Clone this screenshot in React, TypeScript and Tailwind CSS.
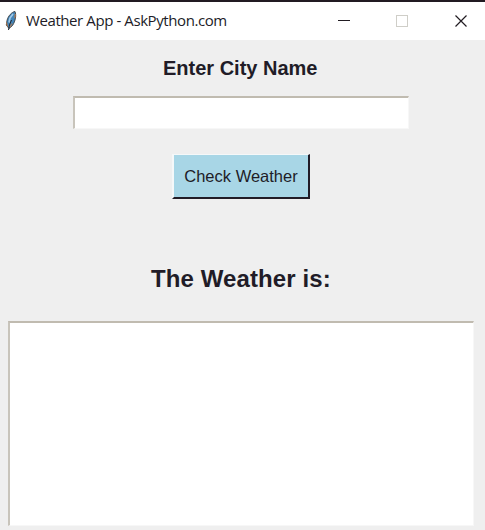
function Feather() {
  return (
    <svg width="12" height="21" viewBox="0 0 12 21" className="mb-0.5 shrink-0">
      <path d="M10 1.500 C7 1.800 3 6 2 10.500 L1.300 15 L4 18.500 L7.500 15.500 C10.500 11 11.500 5 10 1.500Z" fill="#4385b8" stroke="#3a3d42" strokeWidth="0.900" />
      <path d="M8 4 L5 8 L4 12.500" stroke="#a4cae8" strokeWidth="1.600" fill="none" />
      <path d="M6.500 10 L4.500 15 L3.500 20" stroke="#1f2530" strokeWidth="1" fill="none" />
      <path d="M1.500 12.500 L2.500 16.500 M10.300 4 L9.800 8 M7 13.500 L5 17" stroke="#c07a43" strokeWidth="1" />
    </svg>
  );
}

export default function App() {
  return (
    <div className="flex h-[530px] w-[485px] flex-col overflow-hidden bg-[#efefef] font-['Liberation_Sans',Arial,sans-serif] text-[#211c27]">
      <header className="flex h-10 shrink-0 items-center border-t-2 border-[#211a22] bg-white pl-[5px]">
        <Feather />
        <h1 className="mb-0.5 ml-[9px] whitespace-nowrap font-['Open_Sans','Noto_Sans',sans-serif] text-[15px] leading-5 tracking-[-0.41px]">
          Weather App - AskPython.com
        </h1>
        <svg width="132" height="14" viewBox="0 0 132 14" className="mr-[17px] ml-auto shrink-0" shapeRendering="crispEdges">
          <path d="M2 6.500H14" stroke="#211c22" />
          <rect x="60.500" y="1.500" width="11" height="11" fill="none" stroke="#cfcec8" />
          <path d="M119.500 1.500L130.500 12.500M130.500 1.500L119.500 12.500" stroke="#211c22" strokeWidth="1.200" shapeRendering="auto" />
        </svg>
      </header>
      <main className="flex flex-col items-start">
        <label htmlFor="city" className="mt-4 ml-[163px] whitespace-nowrap text-[20px] leading-6 font-bold">
          Enter City Name
        </label>
        <input id="city" className="mt-4 ml-[73px] h-[33px] w-[336px] border-t-2 border-r border-b border-l-2 border-t-[#c0bbb0] border-r-[#f7f7f7] border-b-[#f7f7f7] border-l-[#c8c4bb] bg-white px-2 outline-none" />
        <button className="mt-[25px] ml-[172px] flex h-[45px] w-[138px] items-center justify-center border-t-[1px] border-r-2 border-b-2 border-l-2 border-t-[#f5f8f9] border-r-[#211c27] border-b-[#211c27] border-l-[#f5f8f9] bg-[#a8d6e6] text-[16.5px] whitespace-nowrap">
          Check Weather
        </button>
        <h2 className="mt-16 ml-[151px] whitespace-nowrap text-[24px] leading-8 font-bold tracking-[0.1px]">The Weather is:</h2>
        <textarea className="mt-[26px] ml-2 block h-[205px] w-[466px] resize-none border-t-2 border-r border-b border-l-2 border-t-[#c0bbb0] border-r-[#f7f7f7] border-b-[#f7f7f7] border-l-[#c8c4bb] bg-white outline-none" />
      </main>
    </div>
  );
}
